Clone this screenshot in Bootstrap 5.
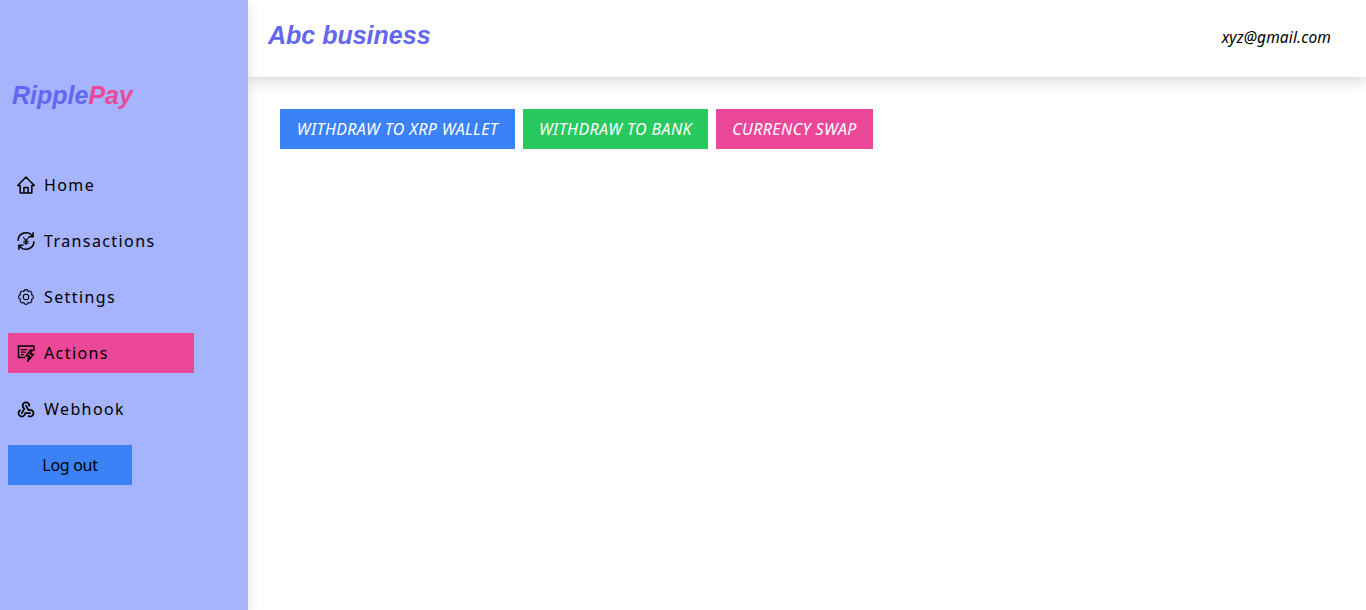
<!DOCTYPE html>
<html lang="en">
<head>
<meta charset="utf-8">
<title>RipplePay</title>
<link href="https://cdn.jsdelivr.net/npm/bootstrap@5.3.0/dist/css/bootstrap.min.css" rel="stylesheet">
<style>
html,body{height:100%;overflow:hidden;background:#fff}
body{font-family:"Noto Sans",sans-serif;color:#000}
.shell{height:610px}
.side{width:248px;background:#a5b4fc;padding:0 8px;box-shadow:0 4px 12px rgba(0,0,0,.12);position:relative;z-index:1;flex:none}
.brand{font:italic 700 25px/30px "Liberation Sans",sans-serif;color:#6366f1;padding:80px 0 0 4px;margin-bottom:55px}
.brand span{color:#ec4899}
.menu-item{height:40px;padding-left:8px;margin-bottom:16px;width:186px;gap:8px;font-size:16px;letter-spacing:1.4px;color:#000;text-decoration:none}
.menu-item svg{width:20px;height:20px;flex:none;fill:none;stroke:#000;stroke-width:1.8;stroke-linecap:round;stroke-linejoin:round}
.menu-item.current{background:#ec4899}
.logout{width:124px;height:40px;background:#3b82f6;border:0;border-radius:0;color:#000;font-size:16px;letter-spacing:-.3px;padding:0;display:block}
.logout:hover{background:#3b82f6;color:#000}
.topbar{height:77px;padding:0 35px 0 20px;box-shadow:0 4px 14px rgba(0,0,0,.16);position:relative}
.biz{font:italic 700 25px/30px "Liberation Sans",sans-serif;color:#6366f1;margin:20px 0 0}
.mail{font-style:italic;font-size:15.5px;letter-spacing:.15px;margin-top:27px;line-height:20px}
.actions{padding:32px 32px;gap:8px}
.act{height:40px;border:0;border-radius:0;color:#fff;font-style:italic;font-size:16px;letter-spacing:.4px;padding:0;text-transform:uppercase}
.act:hover{color:#fff}
.a1{width:235px;background:#3b82f6}.a1:hover{background:#3b82f6}
.a2{width:185px;background:#28c95f}.a2:hover{background:#28c95f}
.a3{width:157px;background:#ec4899}.a3:hover{background:#ec4899}
.menu-item svg .ico-thin{stroke-width:1.3}
.menu-item svg .ico-fine{stroke-width:1.5}
.menu-item svg .ico-bold{stroke-width:2.1}
</style>
</head>
<body>
<div class="d-flex shell">
  <aside class="side">
    <div class="brand">Ripple<span>Pay</span></div>
    <nav>
      <a class="menu-item d-flex align-items-center" href="#">
        <svg viewBox="0 0 24 24"><path d="M2 12.500 12 2.500l10 10h-3V21.500H5v-9zM9.500 21.500v-6.500h5v6.500"/></svg>Home</a>
      <a class="menu-item d-flex align-items-center" href="#">
        <svg viewBox="0 0 24 24"><path d="M2.500 11A9.500 9.500 0 0 1 20 6.500M21.500 13A9.500 9.500 0 0 1 4 17.500"/><path d="M20.500 2v4.800h-4.800M3.500 22v-4.800h4.800"/><path class="ico-thin" d="M9 7.800 12 11.500 15 7.800M12 11.500V16.500M9.300 12.200h5.400M9.300 14.500h5.400"/></svg>Transactions</a>
      <a class="menu-item d-flex align-items-center" href="#">
        <svg viewBox="0 0 24 24"><path class="ico-thin" d="M14.680 5.530A2.700 2.700 0 0 1 18.470 9.320 2.700 2.700 0 0 1 18.470 14.680 2.700 2.700 0 0 1 14.680 18.470 2.700 2.700 0 0 1 9.320 18.470 2.700 2.700 0 0 1 5.530 14.680 2.700 2.700 0 0 1 5.530 9.320 2.700 2.700 0 0 1 9.320 5.530 2.700 2.700 0 0 1 14.680 5.530z"/><circle class="ico-thin" cx="12" cy="12" r="3.300"/></svg>Settings</a>
      <a class="menu-item current d-flex align-items-center" href="#">
        <svg viewBox="0 0 24 24"><path d="M10.500 17.500H3V3.500h18.500V9"/><path class="ico-fine" d="M6.500 8h6M6.500 11h4.500M6.500 14h2.500"/><path d="M17.500 8.500 12 15.500h4l-2 6.500 7-8.500h-4l2.500-5z"/></svg>Actions</a>
      <a class="menu-item d-flex align-items-center" href="#">
        <svg viewBox="0 0 24 24"><g class="ico-bold"><path class="ico-bold" d="M4.876 13.610a4 4 0 1 0 6.124 3.390h6"/><path class="ico-bold" d="M15.066 20.502a4 4 0 1 0 1.934-7.502c-.706 0-1.424.179-2 .5l-3-5.500"/><path class="ico-bold" d="M16 8a4 4 0 1 0-8 0c0 1.506.77 2.818 2 3.500l-3 5.500"/></g></svg>Webhook</a>
    </nav>
    <button class="btn logout" type="button">Log out</button>
  </aside>
  <main class="flex-grow-1">
    <header class="topbar d-flex justify-content-between align-items-start">
      <h1 class="biz">Abc business</h1>
      <div class="mail">xyz@gmail.com</div>
    </header>
    <div class="actions d-flex">
      <button class="btn act a1" type="button">Withdraw to XRP Wallet</button>
      <button class="btn act a2" type="button">Withdraw to bank</button>
      <button class="btn act a3" type="button">Currency swap</button>
    </div>
  </main>
</div>
<script src="https://cdn.jsdelivr.net/npm/bootstrap@5.3.0/dist/js/bootstrap.bundle.min.js"></script>
</body>
</html>
